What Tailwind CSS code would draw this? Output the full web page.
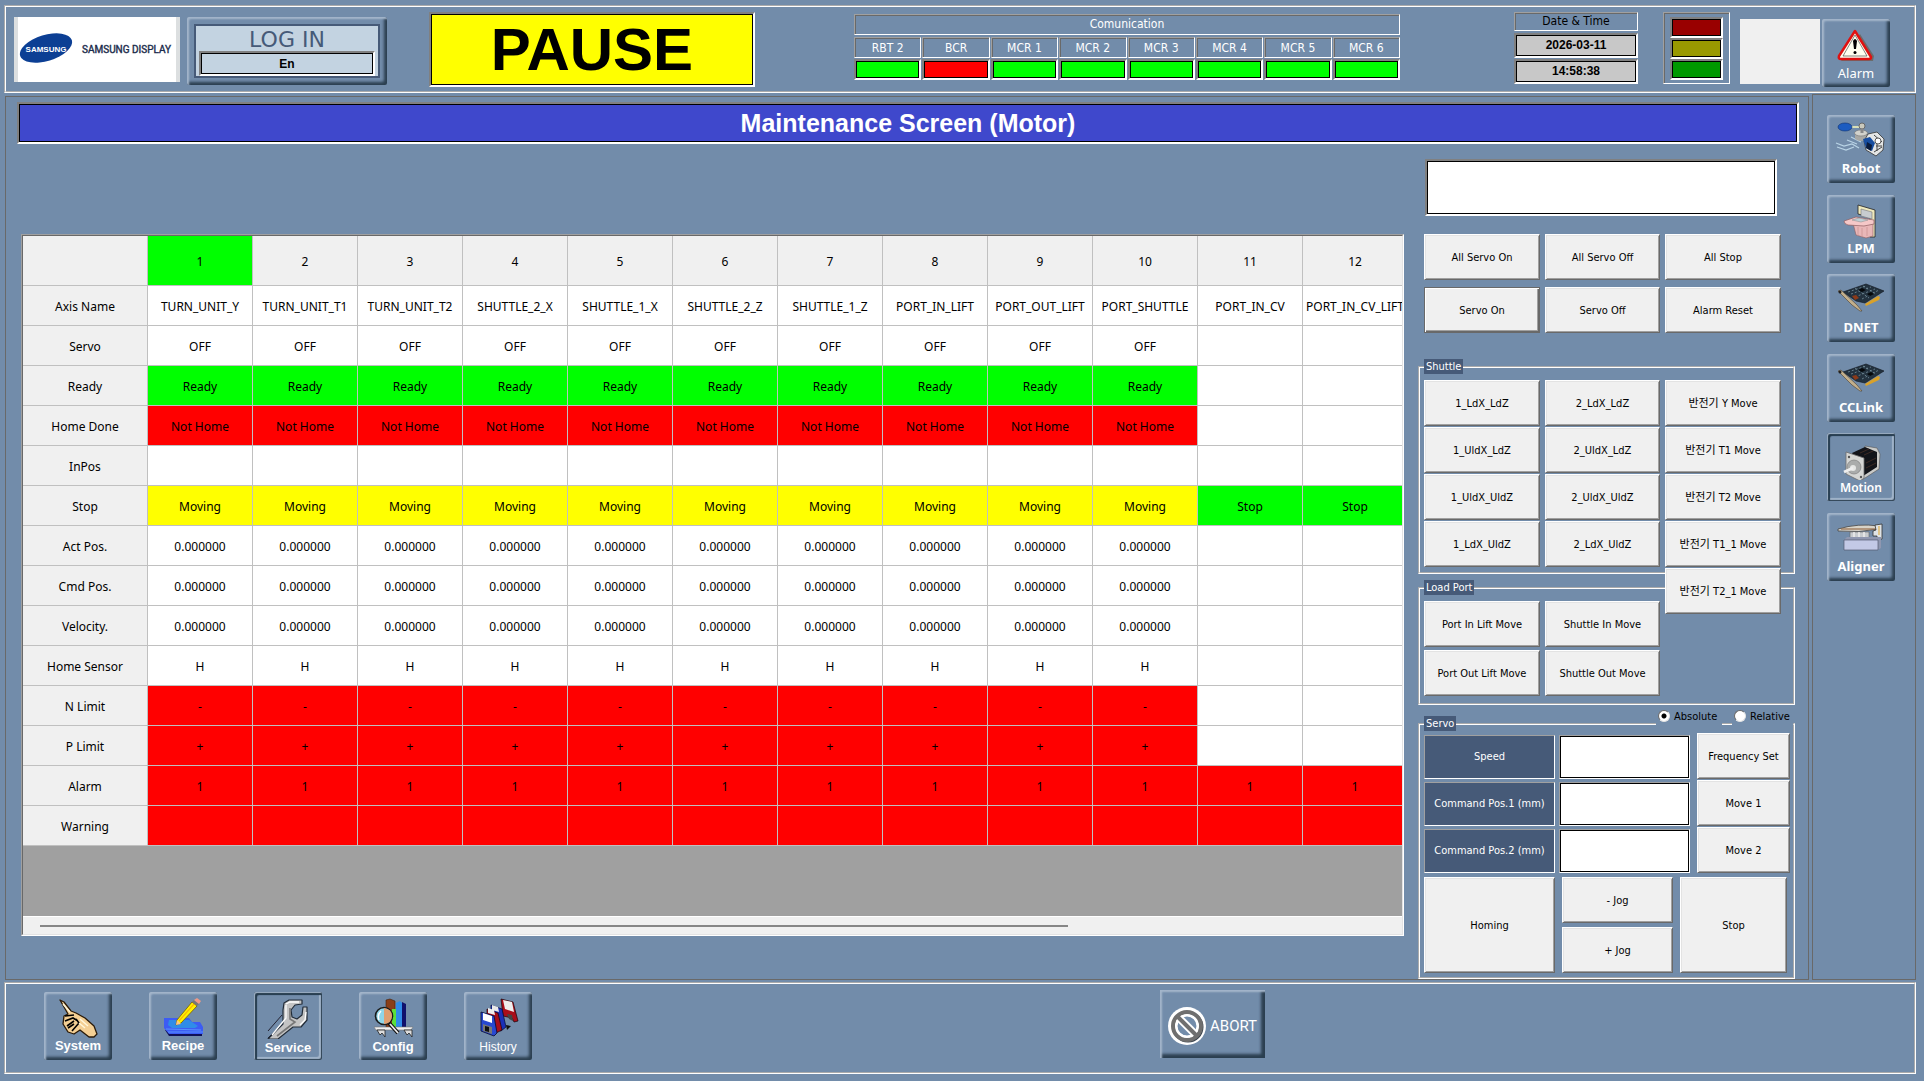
<!doctype html>
<html lang="en">
  <head>
    <title>Maintenance Screen (Motor)</title>
    <meta charset="UTF-8">
    <meta name="viewport" content="width=device-width, initial-scale=1.0">
    <script src="https://cdn.jsdelivr.net/npm/@tailwindcss/browser@4"></script>
  </head>
  <body class="min-h-screen bg-[#728caa] text-black font-['DejaVu_Sans_Condensed','DejaVu_Sans','Noto_Sans_CJK_KR',sans-serif] text-xs">

    <!-- header -->
    <header class="mt-[5px] ml-1 mr-2 h-[88px] flex items-start border-2 [border-style:groove] border-white pl-2 pr-6">
      <div class="mt-[10px] w-[166px] h-[65px] bg-white border-x-4 border-[#dcdfe0]">
        <svg class="w-full h-full" viewBox="0 0 158 65">
          <ellipse cx="28" cy="31" rx="27" ry="13" transform="rotate(-17 28 31)" fill="#0c3f94"/>
          <text x="28" y="35" text-anchor="middle" font-family="Liberation Sans" font-weight="bold" font-size="8" fill="#fff">SAMSUNG</text>
          <text x="64" y="36" font-family="Roboto" font-size="10" fill="#1c2c4c" stroke="#1c2c4c" stroke-width=".4">SAMSUNG DISPLAY</text>
        </svg>
      </div>
      <button class="mt-[10px] ml-[7px] w-[200px] h-[68px] p-[7px] rounded-xs bg-[#728caa] shadow-[inset_2px_2px_2px_#a4b6cb,inset_-3px_-3px_3px_#2b3f50]">
        <span class="flex flex-col h-full items-center bg-[#c3d3e1] border-2 border-[#465a78] px-[3px] pb-px">
          <span class="pt-0.5 text-[22px] leading-[23px] text-[#465a78] font-['DejaVu_Sans']">LOG IN</span>
          <span class="w-full h-[25px] leading-[22px] border-2 border-t-[#808080] border-l-[#808080] border-r-white border-b-white shadow-[inset_0_0_0_1px_#000] font-bold font-['Liberation_Sans']">En</span>
        </span>
      </button>
      <div class="mt-[5px] ml-[42px] w-[326px] h-[75px] flex items-center justify-center bg-[#ffff00] border-2 border-t-[#808080] border-l-[#808080] border-r-white border-b-white shadow-[inset_0_0_0_1px_#000] font-['Liberation_Sans'] font-bold text-[60px] leading-none">PAUSE</div>

      <section class="mt-[7px] ml-[99px] w-[546px] text-white text-center">
        <h2 class="h-[21px] leading-[19px] border border-t-[#a0a0a0] border-l-[#a0a0a0] border-r-white border-b-white shadow-[inset_1px_1px_0_#696969]">Comunication</h2>
        <div id="comm" class="mt-0.5 grid grid-cols-8 gap-x-px"></div>
      </section>

      <div class="ml-auto flex items-start">
        <div class="mt-[5px] w-[124px] flex flex-col gap-px text-center">
          <div class="h-[19px] leading-[17px] border border-t-[#a0a0a0] border-l-[#a0a0a0] border-r-white border-b-white shadow-[inset_1px_1px_0_#696969]">Date &amp; Time</div>
          <div class="mt-px h-[25px] leading-[21px] bg-[#c8c8c8] border-2 border-t-[#808080] border-l-[#808080] border-r-white border-b-white shadow-[inset_0_0_0_1px_#000] font-['Liberation_Sans'] font-bold">2026-03-11</div>
          <div class="h-[25px] leading-[21px] bg-[#c8c8c8] border-2 border-t-[#808080] border-l-[#808080] border-r-white border-b-white shadow-[inset_0_0_0_1px_#000] font-['Liberation_Sans'] font-bold">14:58:38</div>
        </div>
        <div class="mt-[5px] ml-[25px] w-[67px] h-[72px] px-1.5 pt-1 border border-t-[#a0a0a0] border-l-[#a0a0a0] border-r-white border-b-white shadow-[inset_1px_1px_0_#696969]">
          <div class="h-[21px] bg-[#990000] border-2 border-t-[#808080] border-l-[#808080] border-r-white border-b-white shadow-[inset_0_0_0_1px_#000]"></div>
          <div class="h-[21px] bg-[#999900] border-2 border-t-[#808080] border-l-[#808080] border-r-white border-b-white shadow-[inset_0_0_0_1px_#000]"></div>
          <div class="h-[21px] bg-[#009900] border-2 border-t-[#808080] border-l-[#808080] border-r-white border-b-white shadow-[inset_0_0_0_1px_#000]"></div>
        </div>
        <div class="mt-3 ml-2.5 w-20 h-[65px] bg-[#f0f0f0]"></div>
        <button class="mt-3 ml-0.5 size-[68px] flex flex-col items-center rounded-xs shadow-[inset_2px_2px_2px_#a4b6cb,inset_-3px_-3px_3px_#2b3f50] text-white font-['Noto_Sans'] text-[13px] leading-[14px]">
          <svg class="w-[68px] h-[47px]" viewBox="0 0 68 47">
            <path d="M19 42h32l1-5-14-22z" fill="#6b6b6b"/>
            <path d="M33 12 49 38Q49 40 47 40H19Q16 40 17 37Z" fill="#fffff0" stroke="#e01010" stroke-width="2.5" stroke-linejoin="round"/>
            <path d="M33 16 45 37H21Z" fill="none" stroke="#333" stroke-width=".6"/>
            <path d="M31 22q2-4 4 0l-1 8h-2z" fill="#000"/><circle cx="33" cy="33.500" r="1.500" fill="#000"/>
          </svg>
          <span>Alarm</span>
        </button>
      </div>
    </header>

    <div class="mt-px ml-[5px] mr-2 flex gap-[3px]">
      <main class="mt-0.5 flex-1 min-w-0 border border-[#696969] pl-[11px] pr-[9px] pt-[5px]">
        <h1 class="h-[42px] pt-px flex items-center justify-center bg-[#3f48cc] border-2 border-t-[#808080] border-l-[#808080] border-r-white border-b-white shadow-[inset_0_0_0_1px_#000] text-white font-['Liberation_Sans'] font-bold text-[25px] leading-none">Maintenance Screen (Motor)</h1>

        <div class="flex gap-3.5 px-1 items-start">
          <!-- axis table -->
          <div class="mt-[90px] flex-1 min-w-0 border border-t-[#a0a0a0] border-l-[#a0a0a0] border-r-white border-b-white">
            <div class="h-[700px] flex flex-col overflow-hidden border border-t-[#696969] border-l-[#696969] border-r-[#e3e3e3] border-b-[#e3e3e3] bg-[#a0a0a0]">
              <table class="w-[1385px] table-fixed border-separate border-spacing-0 text-center font-['Noto_Sans'] text-xs">
                <thead><tr id="head" class="h-[50px] bg-[#f0f0f0]"></tr></thead>
                <tbody id="axes"></tbody>
              </table>
              <div class="mt-auto h-[18px] shrink-0 bg-[#f0f0f0] border-t border-white pt-2 pl-[17px]">
                <div class="w-[1028px] h-0.5 bg-[#868686]"></div>
              </div>
            </div>
          </div>

          <!-- commands -->
          <div class="w-[377px] shrink-0 text-[11px] leading-[15px] [&_button]:h-[46px] [&_button]:bg-[#f0f0f0] [&_button]:border [&_button]:border-t-white [&_button]:border-l-white [&_button]:border-r-[#696969] [&_button]:border-b-[#696969] [&_button]:shadow-[inset_1px_1px_0_#e3e3e3,inset_-1px_-1px_0_#a0a0a0]">
            <div class="mt-[15px] ml-[7px] w-[352px] h-[57px] bg-white border-2 border-t-[#808080] border-l-[#808080] border-r-white border-b-white shadow-[inset_0_0_0_1px_#000]"></div>

            <div class="mt-[18px] ml-1.5 grid grid-cols-[116px_115px_116px] gap-x-[5px] gap-y-[7px]">
              <button>All Servo On</button>
              <button>All Servo Off</button>
              <button>All Stop</button>
              <button class="border-[#696969]! shadow-[inset_1px_1px_0_#fff,inset_-1px_-1px_0_#696969,inset_-2px_-2px_0_#a0a0a0]!">Servo On</button>
              <button>Servo Off</button>
              <button>Alarm Reset</button>
            </div>

            <!-- the third column is one button longer and hangs over the next group -->
            <fieldset class="mt-[26px] h-[215px] border-2 [border-style:groove] border-white pl-1 pt-1.5">
              <legend class="bg-[#465a78] text-white px-0.5">Shuttle</legend>
              <div class="grid grid-cols-[116px_115px_116px] gap-x-[5px] gap-y-px">
                <button>1_LdX_LdZ</button>
                <button>2_LdX_LdZ</button>
                <button>반전기 Y Move</button>
                <button>1_UldX_LdZ</button>
                <button>2_UldX_LdZ</button>
                <button>반전기 T1 Move</button>
                <button>1_UldX_UldZ</button>
                <button>2_UldX_UldZ</button>
                <button>반전기 T2 Move</button>
                <button>1_LdX_UldZ</button>
                <button>2_LdX_UldZ</button>
                <button>반전기 T1_1 Move</button>
                <button class="col-start-3 relative z-10">반전기 T2_1 Move</button>
              </div>
            </fieldset>

            <fieldset class="mt-1.5 h-[125px] border-2 [border-style:groove] border-white pl-1 pt-1.5">
              <legend class="bg-[#465a78] text-white px-0.5">Load Port</legend>
              <div class="grid grid-cols-[116px_115px] gap-x-[5px] gap-y-[3px]">
                <button>Port In Lift Move</button>
                <button>Shuttle In Move</button>
                <button>Port Out Lift Move</button>
                <button>Shuttle Out Move</button>
              </div>
            </fieldset>

            <fieldset class="relative mt-[11px] border-2 [border-style:groove] border-white pl-1 pt-0.5 pb-1">
              <legend class="bg-[#465a78] text-white px-0.5">Servo</legend>
              <div class="absolute -top-6 right-0 flex gap-2.5">
                <label class="flex items-center gap-1 h-[18px] w-[66px] bg-[#728caa] pl-0.5"><input type="radio" name="mode" checked class="appearance-none size-3 shrink-0 rounded-full bg-white border border-t-[#696969] border-l-[#696969] border-[#e3e3e3] checked:bg-[radial-gradient(#000_2px,#fff_3px)]">Absolute</label>
                <label class="flex items-center gap-1 h-[18px] w-[61px] bg-[#728caa] pl-0.5"><input type="radio" name="mode" class="appearance-none size-3 shrink-0 rounded-full bg-white border border-t-[#696969] border-l-[#696969] border-[#e3e3e3]">Relative</label>
              </div>
              <div class="grid grid-cols-[131px_134px_93px] gap-x-1 gap-y-px items-end [&_label]:h-11 [&_label]:leading-[42px] [&_label]:text-center [&_label]:text-white [&_label]:bg-[#465a78] [&_label]:border [&_label]:border-t-[#a0a0a0] [&_label]:border-l-[#a0a0a0] [&_label]:border-r-white [&_label]:border-b-white [&_input]:h-11 [&_input]:w-[131px] [&_input]:bg-white [&_input]:border [&_input]:border-t-[#a0a0a0] [&_input]:border-l-[#a0a0a0] [&_input]:border-r-white [&_input]:border-b-white [&_input]:shadow-[inset_0_0_0_1px_#000] [&_input]:px-2">
                <label for="speed">Speed</label><input id="speed" type="text"><button>Frequency Set</button>
                <label for="pos1">Command Pos.1 (mm)</label><input id="pos1" type="text"><button>Move 1</button>
                <label for="pos2">Command Pos.2 (mm)</label><input id="pos2" type="text"><button>Move 2</button>
              </div>
              <div class="mt-1 grid grid-cols-[131px_111px_107px] gap-x-[7px] gap-y-1">
                <button class="row-span-2 h-auto!">Homing</button>
                <button>- Jog</button>
                <button class="row-span-2 h-auto!">Stop</button>
                <button>+ Jog</button>
              </div>
            </fieldset>
          </div>
        </div>
      </main>

      <!-- service pages -->
      <nav class="w-[104px] border border-[#696969] pt-5 pl-3.5">
        <div class="h-[466px] flex flex-col justify-between [&_button]:size-[68px] [&_button]:flex [&_button]:flex-col [&_button]:items-center [&_button]:rounded-xs [&_button]:shadow-[inset_2px_2px_2px_#a4b6cb,inset_-3px_-3px_3px_#2b3f50] [&_button]:text-white [&_button]:font-['Noto_Sans'] [&_button]:font-bold [&_button]:text-[13px] [&_button]:leading-[12px] [&_svg]:w-[68px] [&_svg]:h-[47px]">
          <button>
            <svg viewBox="0 0 68 47">
              <path d="M9 28l8 3 8-2 7 4M10 32l9 3 8-3M20 25l10 4M24 22l10 5" fill="none" stroke="#b9d4e6" stroke-width="1.200"/>
              <path d="M24 12h10" stroke="#d7dfb8" stroke-width="2"/>
              <ellipse cx="18" cy="12" rx="7" ry="4" fill="#1c5cc0" stroke="#0d3170" stroke-width=".6"/>
              <path d="M28 18v6q6 4 12 0v-6z" fill="#a8a8a4"/><ellipse cx="34" cy="18" rx="6.500" ry="3" fill="#d2d2cc" stroke="#777" stroke-width=".6"/>
              <circle cx="35" cy="11" r="3" fill="#c9c9bd" stroke="#555" stroke-width=".8"/><path d="M35 13v5" stroke="#888" stroke-width="3"/>
              <path d="M41 19l9-2 7 7-1 11-7 6-10-6-2-9z" fill="#e4e6e6" stroke="#333" stroke-width=".8"/>
              <path d="M36 24l7-2 5 6-3 8-6-3z" fill="#174d9f"/><path d="M40 27l5 3-1 6-5-3z" fill="#0b1c3c"/>
              <path d="M47 20l8 7M49 31h6M47 37l8-5M50 24v12" stroke="#444" stroke-width="1"/><circle cx="51" cy="26" r="3" fill="#fff" stroke="#333" stroke-width=".8"/>
            </svg>
            <span>Robot</span>
          </button>
          <button>
            <svg viewBox="0 0 68 47">
              <path d="M31 10l17 5v27h-5V22l-12-3z" fill="#efe9bd" stroke="#222" stroke-width=".8"/>
              <path d="M34 14l11 3v7l-11-3z" fill="#c7cccf" stroke="#777" stroke-width=".6"/>
              <path d="M26 28l3 12 10 3 7-2V27z" fill="#e9b7b8" stroke="#8d5c5e" stroke-width=".6"/>
              <path d="M17 26l12-4 18 3v4l-10 2-16-1q-4-1-4-4z" fill="#f5c8c8" stroke="#8d5c5e" stroke-width=".7"/>
              <path d="M25 25l7-2 9 2-7 2z" fill="#bfd0d6" stroke="#888" stroke-width=".5"/>
              <path d="M31 32v9M35 33v9M40 32v9" stroke="#cc9496" stroke-width=".8"/>
            </svg>
            <span>LPM</span>
          </button>
          <button>
            <svg viewBox="0 0 68 47">
              <path d="M38 30l13-8 2 1-1 3-13 6z" fill="#d9a129"/>
              <path d="M16 18l23-8 18 7-19 12-9-2z" fill="#23323f" stroke="#10161c" stroke-width=".6"/>
              <path d="M21 18l18-6M24 20l20-7M28 23l20-8M35 25l17-9M28 14l14 10M36 12l13 8" stroke="#76909c" stroke-width=".8" stroke-dasharray="2 2"/>
              <path d="M31 16l4-2 4 2-4 2zM40 20l4-2 3 2-4 2z" fill="#05080b"/><path d="M25 22l4-1 3 3-4 2z" fill="#8c3a18"/>
              <path d="M11 17l3-1 16 15 5 6-2 0-8-6z" fill="#c4b08c" stroke="#4c4030" stroke-width=".6"/><circle cx="13" cy="18" r="1.500" fill="#222"/>
            </svg>
            <span>DNET</span>
          </button>
          <button>
            <svg viewBox="0 0 68 47">
              <path d="M38 30l13-8 2 1-1 3-13 6z" fill="#d9a129"/>
              <path d="M16 18l23-8 18 7-19 12-9-2z" fill="#23323f" stroke="#10161c" stroke-width=".6"/>
              <path d="M21 18l18-6M24 20l20-7M28 23l20-8M35 25l17-9M28 14l14 10M36 12l13 8" stroke="#76909c" stroke-width=".8" stroke-dasharray="2 2"/>
              <path d="M31 16l4-2 4 2-4 2zM40 20l4-2 3 2-4 2z" fill="#05080b"/><path d="M25 22l4-1 3 3-4 2z" fill="#8c3a18"/>
              <path d="M11 17l3-1 16 15 5 6-2 0-8-6z" fill="#c4b08c" stroke="#4c4030" stroke-width=".6"/><circle cx="13" cy="18" r="1.500" fill="#222"/>
            </svg>
            <span>CCLink</span>
          </button>
          <button class="shadow-[inset_1px_1px_1px_#a4b6cb,inset_-1px_-1px_1px_#2b3f50,inset_3px_3px_1px_#22384a,inset_-3px_-3px_1px_#a4b6cb]! text-xs! font-semibold!">
            <svg viewBox="0 0 68 47">
              <path d="M38 13l12 2 3 6-1 15-14 9-6 3z" fill="#c9cac8" stroke="#555" stroke-width=".6"/>
              <path d="M25 20l13-6 12 5v15l-14 9z" fill="#121419"/><path d="M33 20l9-4M37 22l9-4M39 30l10-5M39 35l10-5" stroke="#3c2a24" stroke-width="1"/>
              <path d="M19 19l18 6v20l-4 3-14-7z" fill="#d5d6d4" stroke="#6c6c6c" stroke-width=".8"/>
              <circle cx="27" cy="34" r="7" fill="#aaacab" stroke="#777" stroke-width=".6"/><circle cx="26" cy="35" r="3" fill="#e5e6e4"/><path d="M17 39l9-4" stroke="#eee" stroke-width="3"/>
              <circle cx="22" cy="24" r="1.200" fill="#555"/><circle cx="34" cy="44" r="1.200" fill="#555"/>
            </svg>
            <span class="pt-0.5">Motion</span>
          </button>
          <button>
            <svg viewBox="0 0 68 47">
              <path d="M11 16q20-6 41-3v3q-20 4-41 2z" fill="#d8d3c8" stroke="#444" stroke-width=".8"/><path d="M14 16h36" stroke="#8a5a33" stroke-width="1.200"/>
              <path d="M23 19h19v6H23z" fill="#c8cccf" stroke="#666" stroke-width=".6"/><path d="M27 19v6M32 19v6M37 19v6" stroke="#eee" stroke-width="1.500"/>
              <path d="M48 12l7-1v15l-5 2v-5h-4v-5l3-1z" fill="#dfe3e6" stroke="#333" stroke-width=".8"/><path d="M52 13v9" stroke="#e2b04a" stroke-width="1.200"/>
              <path d="M17 27l3-3h34v11l-3 2H17z" fill="#8f97b0"/><path d="M17 27h34v10H17z" fill="#c3c9e6" stroke="#555a70" stroke-width=".7"/>
            </svg>
            <span>Aligner</span>
          </button>
        </div>
      </nav>
    </div>

    <!-- bottom menu -->
    <footer class="mt-0.5 ml-1 mr-2 h-[92px] flex items-start border-2 [border-style:groove] border-white pl-[38px] pt-2">
      <div class="flex gap-[37px] [&_button]:size-[68px] [&_button]:flex [&_button]:flex-col [&_button]:items-center [&_button]:rounded-xs [&_button]:shadow-[inset_2px_2px_2px_#a4b6cb,inset_-3px_-3px_3px_#2b3f50] [&_button]:text-white [&_button]:font-['Liberation_Sans'] [&_button]:font-bold [&_button]:text-[13px] [&_button]:leading-[14px] [&_svg]:w-[68px] [&_svg]:h-[47px]">
        <button>
          <svg viewBox="0 0 68 47">
            <path d="M16 8l4 2 7 9 5 2 9 5 9 8 3 8-3 3-5 0-9-7-6 4-6-2-5-8 1-8 4-2z" fill="#f4cf94" stroke="#2a1a08" stroke-width="1.300" stroke-linejoin="round"/>
            <path d="M21 24l9-1M21 29l8-3 5 3M23 34l7-5M28 39l7-8-3-4M24 36l6-4" fill="none" stroke="#000" stroke-width="1.600"/>
            <path d="M36 27l8 7M35 31l6 5M19 12l7 8" stroke="#fff6da" stroke-width="1.500"/>
          </svg>
          <span>System</span>
        </button>
        <button>
          <svg viewBox="0 0 68 47">
            <path d="M16 38l4 6h33v-6z" fill="#101058"/>
            <path d="M15 26h25l3 4h8l3 5v7H20l-5-6z" fill="#3c5cf4"/><path d="M17 37l35 1M19 40h35" stroke="#5fa0ff" stroke-width=".8"/>
            <path d="M20 28h20l9 6-3 2H23l-4-3z" fill="#2f8ce8"/>
            <path d="M27 33l1-5 15-18 5 4-16 17z" fill="#fff200" stroke="#7a5a00" stroke-width=".8"/><path d="M30 29l15-17" stroke="#ffb400" stroke-width="1.200"/>
            <path d="M27 33l1-5 4 4z" fill="#f5c58c"/><path d="M43 10l2-2 5 4-2 2z" fill="#777"/><path d="M45 8l3-2 4 3-2 3z" fill="#f09a86"/>
          </svg>
          <span>Recipe</span>
        </button>
        <button class="shadow-[inset_1px_1px_1px_#a4b6cb,inset_-1px_-1px_1px_#2b3f50,inset_3px_3px_1px_#22384a,inset_-3px_-3px_1px_#a4b6cb]!">
          <svg viewBox="0 0 68 47">
            <path d="M14 39l14-16M14 46l15-14" stroke="#223" stroke-width="1"/>
            <path d="M30 11l5-3h13v4l-7 1-4 5 1 7 5 2 5-4 1-8 4 0 0 13-6 7-8 0-15 12-10 0 15-15 0-14z" fill="#c4c4c4" stroke="#222c38" stroke-width="1.200" stroke-linejoin="round"/>
            <path d="M32 12l4-2h9M32 13v13L18 43M52 20l-1 8-5 5" fill="none" stroke="#fff" stroke-width="1.300"/>
            <path d="M36 16v11l5 3-18 14" fill="none" stroke="#777" stroke-width="1.600"/>
          </svg>
          <span class="pt-0.5">Service</span>
        </button>
        <button>
          <svg viewBox="0 0 68 47">
            <path d="M27 8l4-1 5 2v26h-9z" fill="#8a3f18" stroke="#40200c" stroke-width=".6"/><path d="M33 17h5v19h-5z" fill="#5be03a"/>
            <path d="M37 11l4-2 2 2v25h-6z" fill="#2f8ce8"/><path d="M43 10l4 2v24h-4z" fill="#10106c"/>
            <path d="M15 35h39l-2 3H17z" fill="#f0f0f0" stroke="#777" stroke-width=".6"/><path d="M18 38h8v7l-3-4-2 2zM45 38h8v7l-3-4-2 2z" fill="#ddd" stroke="#222" stroke-width=".8"/>
            <path d="M30 31l9 10" stroke="#111" stroke-width="4"/><path d="M31 32l8 9" stroke="#eee" stroke-width="1.800"/>
            <circle cx="25" cy="24" r="8.500" fill="#8fd6e8" stroke="#1a1a1a" stroke-width="1.600"/><path d="M25 16q8 1 8 8t-8 8z" fill="#e0a070"/><path d="M20 28q-2-5 2-9" stroke="#fff" stroke-width="1.500" fill="none"/>
          </svg>
          <span class="pt-px">Config</span>
        </button>
        <button>
          <svg viewBox="0 0 68 47">
            <path d="M37 7l12 3 5 19-4 1-2-4-9-2z" fill="#a80d1a" stroke="#1a0508" stroke-width=".7"/><path d="M39 8l9 2 2 10-9-3z" fill="#eee"/><path d="M43 22l5 1 1 6-4-2z" fill="#444"/>
            <path d="M27 13l11 4 4 18-5 4-10-3z" fill="#1a2fb8" stroke="#050a30" stroke-width=".7"/><path d="M28 13l6 2 1 5-7-2z" fill="#e8e8e8"/>
            <path d="M23 17l11 4 4 17-6 3-9-4z" fill="#a80d1a" stroke="#1a0508" stroke-width=".7"/><path d="M24 16l6 2 1 5-7-2z" fill="#eee"/>
            <path d="M17 20l13 4 3 17-3 3-13-5z" fill="#2848d0" stroke="#050a30" stroke-width=".8"/><path d="M19 21l9 3v7l-9-3z" fill="#fff"/><path d="M19 32l9 3v7l-9-3z" fill="#777"/><path d="M21 34l4 1v5l-4-1z" fill="#111"/>
            <path d="M42 33l5 1-4 4z" fill="#111"/>
          </svg>
          <span class="pt-px font-normal text-xs leading-[14px]">History</span>
        </button>
      </div>
      <button class="ml-[628px] -mt-0.5 w-[105px] h-[68px] flex items-center pl-2 pt-1 gap-1 shadow-[inset_2px_2px_2px_#a4b6cb,inset_-4px_-4px_3px_#2b3f50] text-white text-[15px] leading-5 font-['Roboto']">
        <svg class="size-[38px] shrink-0" viewBox="0 0 38 38">
          <circle cx="19" cy="19" r="19" fill="#fff"/>
          <circle cx="20" cy="20" r="14" fill="none" stroke="#39424c" stroke-width="3"/>
          <circle cx="19" cy="19" r="14" fill="#fff" stroke="#6f6f6f" stroke-width="4"/>
          <circle cx="19" cy="19" r="10" fill="#728caa"/><circle cx="19" cy="19" r="10.500" fill="none" stroke="#fff" stroke-width="2"/>
          <path d="M11 11l16 16" stroke="#fff" stroke-width="8"/><path d="M9 9l20 20" stroke="#6f6f6f" stroke-width="4"/>
        </svg>
        ABORT
      </button>
    </footer>
  </body>
  <script>
    const comm = [['RBT 2', 1], ['BCR', 0], ['MCR 1', 1], ['MCR 2', 1], ['MCR 3', 1], ['MCR 4', 1], ['MCR 5', 1], ['MCR 6', 1]];
    document.querySelector('#comm').innerHTML = comm.map(([name, ok]) => `
      <div>
        <div class="h-[21px] leading-[20px] border border-t-[#a0a0a0] border-l-[#a0a0a0] border-r-white border-b-white shadow-[inset_1px_1px_0_#696969]">${name}</div>
        <div class="mt-px h-[21px] border-2 border-t-[#808080] border-l-[#808080] border-r-white border-b-white shadow-[inset_0_0_0_1px_#000] ${ok ? 'bg-[#00ff00]' : 'bg-[#ff0000]'}"></div>
      </div>`).join('');

    const GREEN = 'bg-[#00ff00]', RED = 'bg-[#ff0000]', YELLOW = 'bg-[#ffff00]', WHITE = 'bg-white';
    const cell = 'border-r border-b border-[#c0c0c0] px-0 pt-0.5 pb-0 font-normal whitespace-nowrap';
    const names = ['TURN_UNIT_Y', 'TURN_UNIT_T1', 'TURN_UNIT_T2', 'SHUTTLE_2_X', 'SHUTTLE_1_X', 'SHUTTLE_2_Z', 'SHUTTLE_1_Z', 'PORT_IN_LIFT', 'PORT_OUT_LIFT', 'PORT_SHUTTLE', 'PORT_IN_CV', 'PORT_IN_CV_LIFT'];

    // label, text and colour of axes 1-10, text and colour of axes 11-12
    const rows = [
      ['Servo', 'OFF', WHITE, '', WHITE],
      ['Ready', 'Ready', GREEN, '', WHITE],
      ['Home Done', 'Not Home', RED, '', WHITE],
      ['InPos', '', WHITE, '', WHITE],
      ['Stop', 'Moving', YELLOW, 'Stop', GREEN],
      ['Act Pos.', '0.000000', WHITE, '', WHITE],
      ['Cmd Pos.', '0.000000', WHITE, '', WHITE],
      ['Velocity.', '0.000000', WHITE, '', WHITE],
      ['Home Sensor', 'H', WHITE, '', WHITE],
      ['N Limit', '-', RED, '', WHITE],
      ['P Limit', '+', RED, '', WHITE],
      ['Alarm', '1', RED, '1', RED],
      ['Warning', '', RED, '', RED],
    ];

    document.querySelector('#head').innerHTML =
      `<th class="${cell} w-[125px]"></th>` +
      names.map((n, i) => `<th scope="col" class="${cell} w-[105px] ${i == 0 ? GREEN : ''}">${i + 1}</th>`).join('');

    const row = (label, cells) => `<tr class="h-10"><th scope="row" class="${cell} bg-[#f0f0f0]">${label}</th>${cells}</tr>`;
    document.querySelector('#axes').innerHTML =
      row('Axis Name', names.map(n => `<td class="${cell} bg-white">${n}</td>`).join('')) +
      rows.map(([label, a, ca, b, cb]) =>
        row(label, names.map((n, i) => `<td class="${cell} ${i < 10 ? ca : cb}">${i < 10 ? a : b}</td>`).join(''))
      ).join('');
  </script>
</html>
